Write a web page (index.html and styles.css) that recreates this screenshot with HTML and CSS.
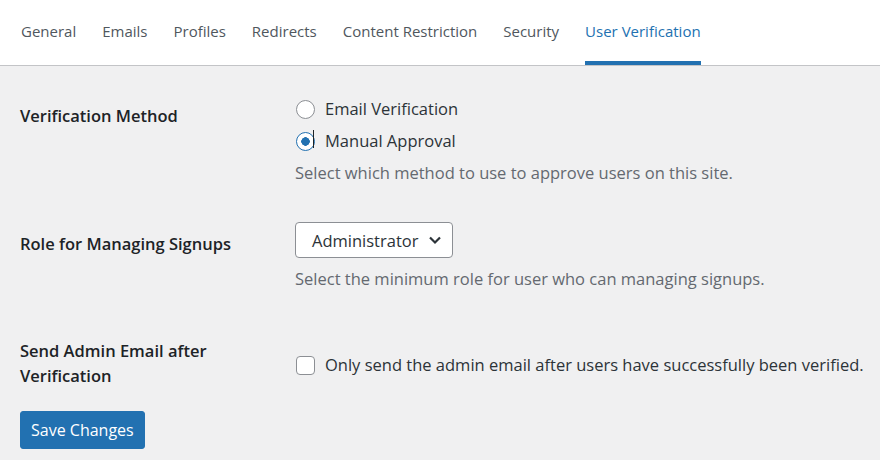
FILE: index.html
```html
<!DOCTYPE html>
<html>

<head>
    <title>User Verification</title>
    <link rel="stylesheet" href="styles.css">
</head>

<body>
    <nav class="tabs">
        <a class="tab">General</a>
        <a class="tab">Emails</a>
        <a class="tab">Profiles</a>
        <a class="tab">Redirects</a>
        <a class="tab">Content Restriction</a>
        <a class="tab">Security</a>
        <a class="tab active">User Verification</a>
    </nav>

    <div class="content">

        <div class="row row-method">
            <div class="label">Verification Method</div>
            <div class="field">
                <label class="option"><input type="radio" name="method" class="radio"> Email Verification</label>
                <label class="option"><input type="radio" name="method" class="radio" checked><span class="caret"></span> Manual Approval</label>
                <p class="desc">Select which method to use to approve users on this site.</p>
            </div>
        </div>

        <div class="row row-role">
            <div class="label">Role for Managing Signups</div>
            <div class="field">
                <div class="select">
                    Administrator
                    <svg class="chevron" width="14" height="14" viewBox="0 0 14 14"><path d="M2 4.5 L7 9.5 L12 4.5" fill="none" stroke="#2c3338" stroke-width="2.2"/></svg>
                </div>
                <p class="desc">Select the minimum role for user who can managing signups.</p>
            </div>
        </div>

        <div class="row row-admin">
            <div class="label">Send Admin Email after Verification</div>
            <div class="field">
                <label class="option"><input type="checkbox" class="check"> Only send the admin email after users have successfully been verified.</label>
            </div>
        </div>

        <button class="button">Save Changes</button>
    </div>
</body>

</html>
```

FILE: styles.css
```css
body {
    margin: 0;
    background: #f0f0f1;
    font-family: "Open Sans", "Noto Sans", sans-serif;
    font-size: 16.5px;
    color: #1d2327;
}

.tabs {
    display: flex;
    gap: 26px;
    height: 65px;
    padding-left: 21px;
    background: #fff;
    border-bottom: 1px solid #c3c4c7;
    font-size: 15px;
}

.tab {
    display: flex;
    align-items: center;
    height: 61px;
    color: #50575e;
    border-bottom: 4px solid transparent;
}

.tab.active {
    color: #2271b1;
    border-bottom-color: #2271b1;
}

.content {
    padding: 27px 0 0 20px;
}

.row {
    display: grid;
    grid-template-columns: 275px 1fr;
}

.label {
    font-weight: 600;
    line-height: 25px;
    width: 215px;
}

.row-method .label {
    padding-top: 10px;
}

.option {
    display: flex;
    align-items: center;
    line-height: 32px;
    color: #2c3338;
    white-space: nowrap;
    position: relative;
}

.radio,
.check {
    appearance: none;
    flex-shrink: 0;
    margin: 0 10px 0 1px;
    width: 19px;
    height: 19px;
    border: 1px solid #8c8f94;
    background: #fff;
    box-sizing: border-box;
}

.radio {
    border-radius: 50%;
}

.radio:checked {
    border-color: #2271b1;
    background: radial-gradient(circle, #2271b1 0 4px, #fff 4.5px);
}

.caret {
    position: absolute;
    left: 18px;
    top: 5px;
    width: 1px;
    height: 18px;
    background: #1d2327;
}

.check {
    border-radius: 4px;
}

.desc {
    margin: 0;
    line-height: 32px;
    color: #646970;
    white-space: nowrap;
}

.row-role {
    margin-top: 33px;
}

.row-role .label {
    padding-top: 9px;
}

.select {
    display: flex;
    align-items: center;
    justify-content: space-between;
    gap: 10px;
    width: 158px;
    height: 36px;
    box-sizing: border-box;
    padding: 0 10px 0 16px;
    background: #fff;
    border: 1px solid #8c8f94;
    border-radius: 4px;
    color: #2c3338;
    white-space: nowrap;
}

.chevron {
    flex-shrink: 0;
}

.row-role .desc {
    margin-top: 5px;
}

.row-admin {
    margin-top: 43px;
}

.row-admin .field {
    padding-top: 11px;
}

.button {
    margin-top: 23px;
    height: 38px;
    padding: 0 10px;
    background: #2271b1;
    border: 1px solid #2271b1;
    border-radius: 3px;
    color: #fff;
    font-family: inherit;
    font-size: 16px;
}
```
